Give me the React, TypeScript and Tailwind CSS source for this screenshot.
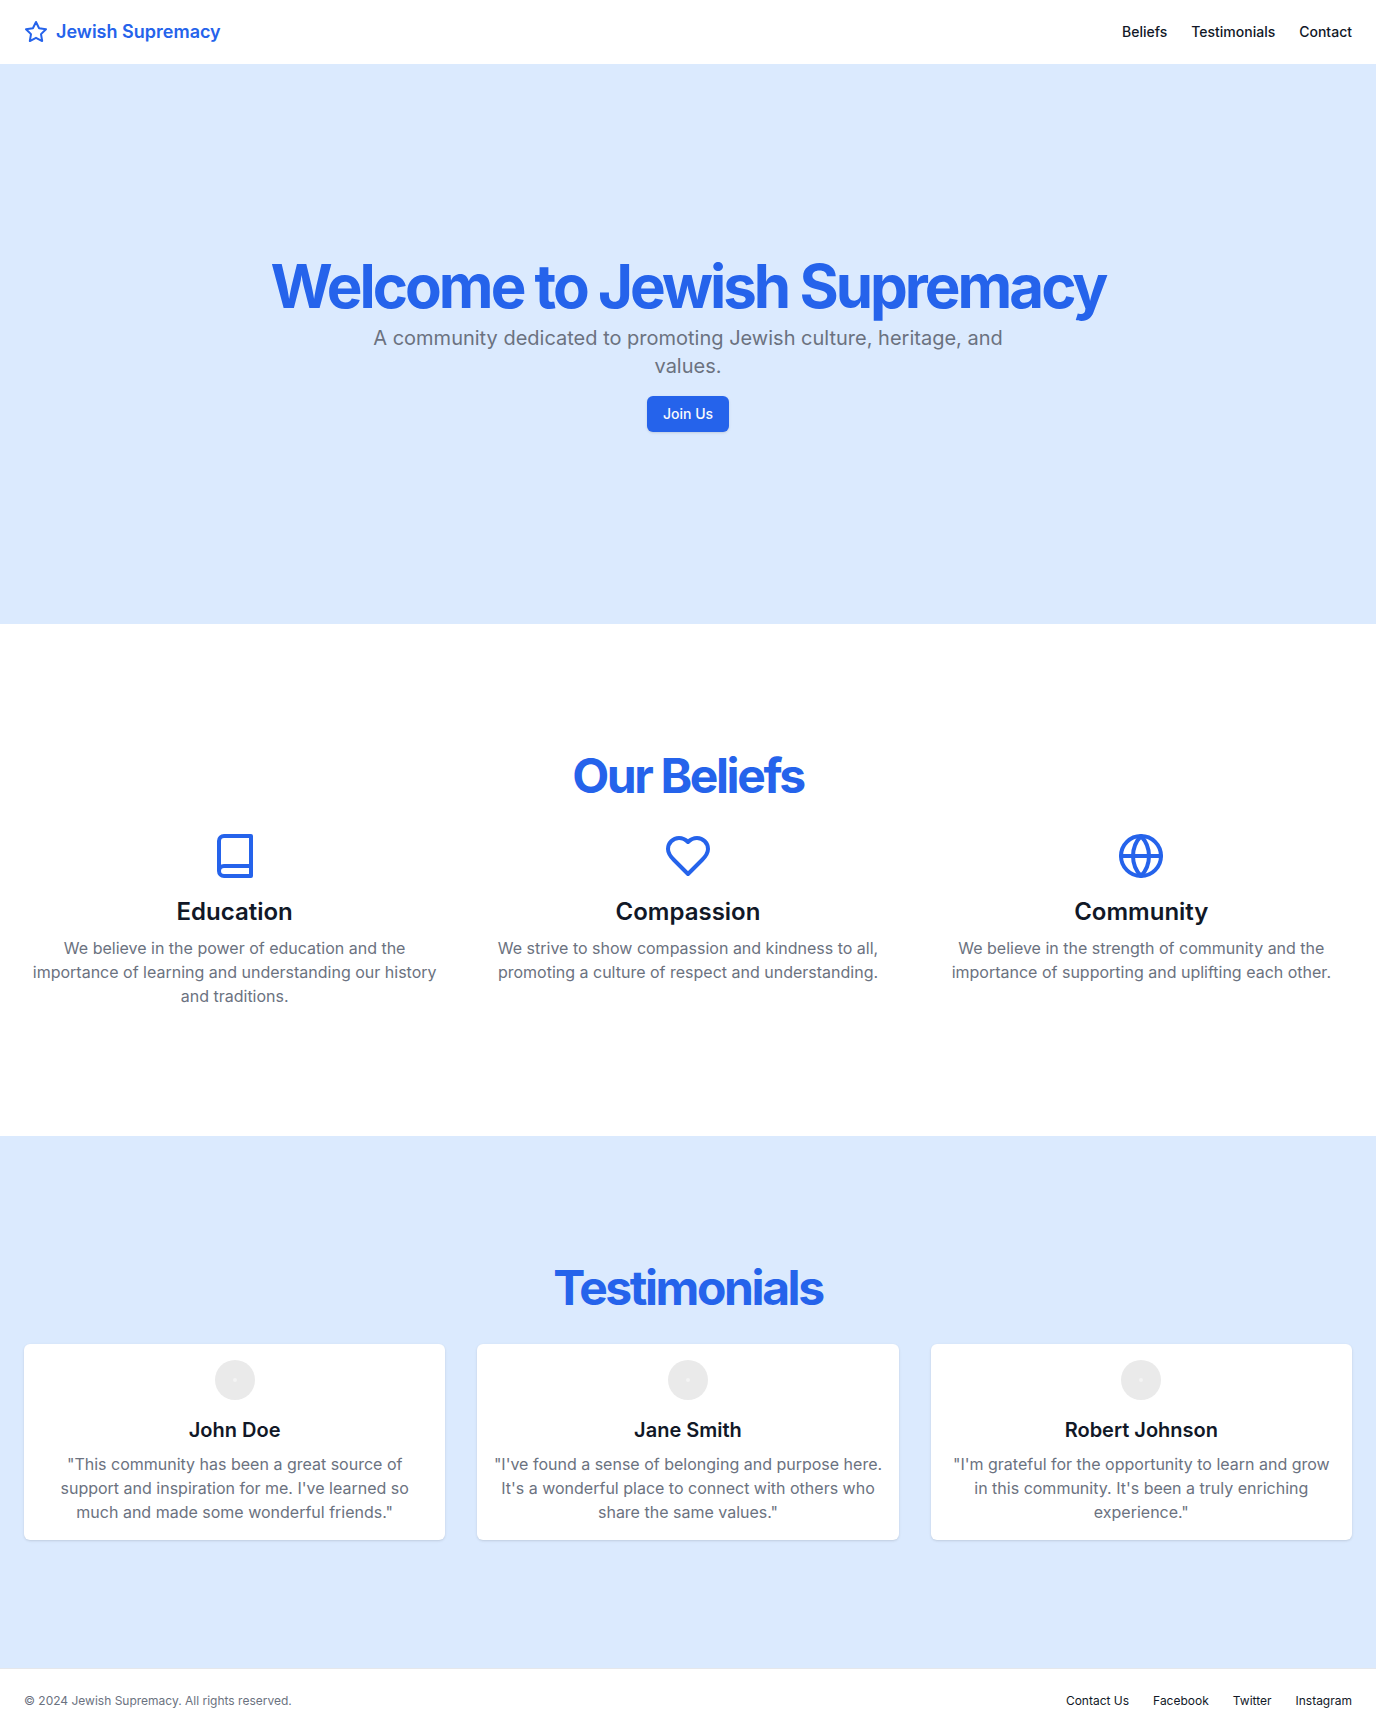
import type { ReactNode } from "react";

function Icon({ className, children }: { className: string; children: ReactNode }) {
  return (
    <svg
      className={className}
      viewBox="0 0 24 24"
      fill="none"
      stroke="currentColor"
      strokeWidth="2"
      strokeLinecap="round"
      strokeLinejoin="round"
      aria-hidden="true"
    >
      {children}
    </svg>
  );
}

const beliefs = [
  {
    icon: <path d="M4 19.5v-15A2.5 2.5 0 0 1 6.5 2H20v20H6.5a2.5 2.5 0 0 1 0-5H20" />,
    title: "Education",
    text: "We believe in the power of education and the importance of learning and understanding our history and traditions.",
  },
  {
    icon: (
      <path d="M19 14c1.49-1.46 3-3.21 3-5.5A5.5 5.5 0 0 0 16.5 3c-1.76 0-3 .5-4.5 2-1.5-1.5-2.74-2-4.5-2A5.5 5.5 0 0 0 2 8.5c0 2.3 1.5 4.05 3 5.5l7 7Z" />
    ),
    title: "Compassion",
    text: "We strive to show compassion and kindness to all, promoting a culture of respect and understanding.",
  },
  {
    icon: (
      <>
        <circle cx="12" cy="12" r="10" />
        <path d="M12 2a14.5 14.5 0 0 0 0 20 14.5 14.5 0 0 0 0-20" />
        <path d="M2 12h20" />
      </>
    ),
    title: "Community",
    text: "We believe in the strength of community and the importance of supporting and uplifting each other.",
  },
];

const testimonials = [
  {
    name: "John Doe",
    quote:
      "\"This community has been a great source of support and inspiration for me. I've learned so much and made some wonderful friends.\"",
  },
  {
    name: "Jane Smith",
    quote:
      "\"I've found a sense of belonging and purpose here. It's a wonderful place to connect with others who share the same values.\"",
  },
  {
    name: "Robert Johnson",
    quote:
      "\"I'm grateful for the opportunity to learn and grow in this community. It's been a truly enriching experience.\"",
  },
];

function Avatar() {
  return (
    <span className="flex size-10 items-center justify-center rounded-full bg-[#eaeaea]">
      <span className="size-1 rounded-full bg-[#f4f4f4]" />
    </span>
  );
}

export default function App() {
  return (
    <div className="flex min-h-screen flex-col bg-white font-[Inter,sans-serif] text-[#111827]">
      <header className="flex h-16 items-center px-6">
        <a href="#" className="flex items-center gap-2 text-[#2563eb]">
          <Icon className="size-6">
            <polygon points="12 2 15.09 8.26 22 9.27 17 14.14 18.18 21.02 12 17.77 5.82 21.02 7 14.14 2 9.27 8.91 8.26 12 2" />
          </Icon>
          <span className="text-lg font-semibold">Jewish Supremacy</span>
        </a>
        <nav className="ml-auto flex gap-6 text-sm font-medium">
          <a href="#beliefs">Beliefs</a>
          <a href="#testimonials">Testimonials</a>
          <a href="#contact">Contact</a>
        </nav>
      </header>
      <main className="flex-1">
        <section className="flex flex-col items-center bg-[#dbeafe] px-6 py-48 text-center">
          <h1 className="text-6xl leading-none font-bold tracking-tighter text-[#2563eb]">
            Welcome to Jewish Supremacy
          </h1>
          <p className="mt-2 max-w-[700px] text-xl text-[#6b7280]">
            A community dedicated to promoting Jewish culture, heritage, and values.
          </p>
          <button
            type="button"
            className="mt-4 h-9 rounded-md bg-[#2563eb] px-4 text-sm font-medium text-gray-50 shadow-sm"
          >
            Join Us
          </button>
        </section>
        <section id="beliefs" className="px-6 py-32">
          <h2 className="text-center text-5xl leading-none font-bold tracking-tighter text-[#2563eb]">
            Our Beliefs
          </h2>
          <div className="mt-8 grid grid-cols-3 gap-8">
            {beliefs.map(({ icon, title, text }) => (
              <div key={title} className="flex flex-col items-center text-center">
                <Icon className="size-12 text-[#2563eb]">{icon}</Icon>
                <h3 className="mt-4 text-2xl font-semibold">{title}</h3>
                <p className="mt-2 text-[#6b7280]">{text}</p>
              </div>
            ))}
          </div>
        </section>
        <section id="testimonials" className="bg-[#dbeafe] px-6 py-32">
          <h2 className="text-center text-5xl leading-none font-bold tracking-tighter text-[#2563eb]">
            Testimonials
          </h2>
          <div className="mt-8 grid grid-cols-3 gap-8">
            {testimonials.map(({ name, quote }) => (
              <div
                key={name}
                className="flex flex-col items-center rounded-md bg-white p-4 text-center shadow-sm"
              >
                <Avatar />
                <h3 className="mt-4 text-xl font-semibold">{name}</h3>
                <p className="mt-2 text-[#6b7280]">{quote}</p>
              </div>
            ))}
          </div>
        </section>
      </main>
      <footer id="contact" className="flex items-center border-t border-gray-200 px-6 py-6 text-xs">
        <p className="text-[#6b7280]">© 2024 Jewish Supremacy. All rights reserved.</p>
        <nav className="ml-auto flex gap-6">
          <a href="#">Contact Us</a>
          <a href="#">Facebook</a>
          <a href="#">Twitter</a>
          <a href="#">Instagram</a>
        </nav>
      </footer>
    </div>
  );
}
